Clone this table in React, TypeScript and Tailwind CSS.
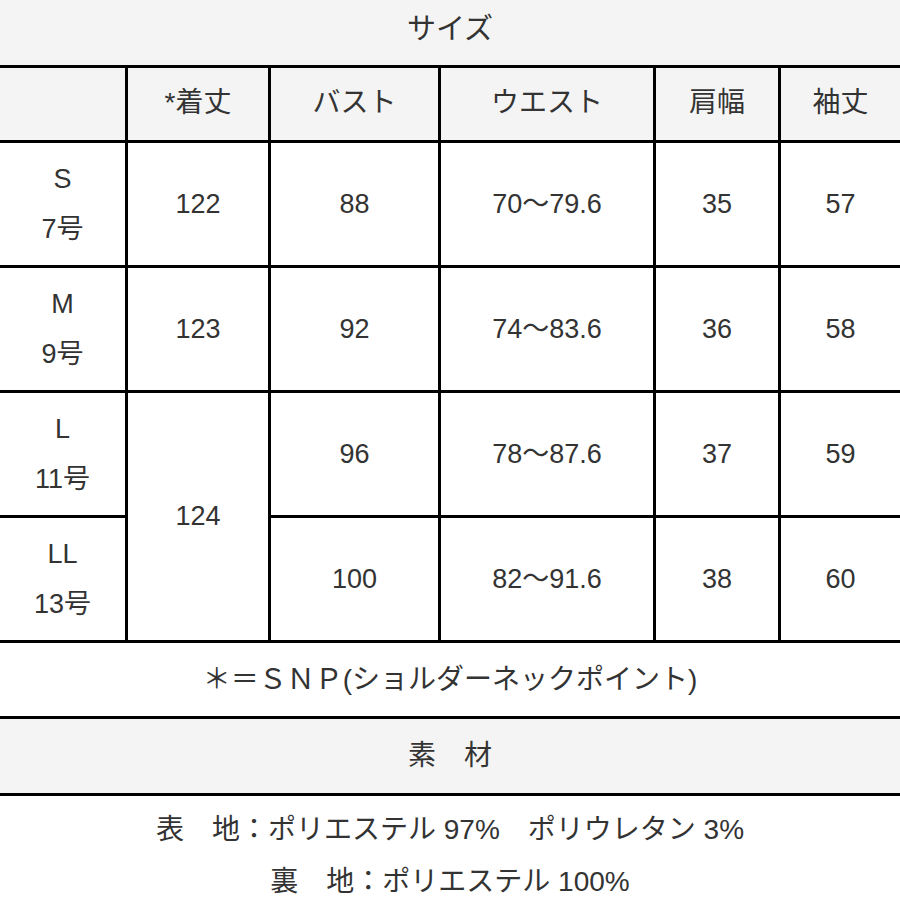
import React from "react";

const font = {
  fontFamily: '"Liberation Sans", "Noto Sans CJK JP", sans-serif',
};

const headers = ["", "*着丈", "バスト", "ウエスト", "肩幅", "袖丈"];

const rows = [
  { size: "S", no: "7号", bust: "88", waist: "70〜79.6", shoulder: "35", sleeve: "57" },
  { size: "M", no: "9号", bust: "92", waist: "74〜83.6", shoulder: "36", sleeve: "58" },
  { size: "L", no: "11号", bust: "96", waist: "78〜87.6", shoulder: "37", sleeve: "59" },
  { size: "LL", no: "13号", bust: "100", waist: "82〜91.6", shoulder: "38", sleeve: "60" },
];

const lengths = ["122", "123"];

const Cell = ({ children, className = "" }: { children?: React.ReactNode; className?: string }) => (
  <div className={`flex items-center justify-center bg-white text-[27px] text-[#333] ${className}`}>
    {children}
  </div>
);

export default function App() {
  return (
    <div className="w-[900px] h-[900px] bg-white overflow-hidden" style={font}>
      <div className="h-[65px] bg-[#f4f4f4] flex items-center justify-center text-[29px] text-[#333] pb-[6px]">
        サイズ
      </div>
      <div className="grid grid-cols-[125px_140px_167px_212px_122px_1fr] grid-rows-[72px_122px_122px_122px_122px] gap-[3px] bg-black py-[3px]">
        {headers.map((h, i) => (
          <Cell key={i} className="bg-[#f4f4f4]! pb-[3px] text-[28px]!">
            {h}
          </Cell>
        ))}
        {rows.map((r, i) => (
          <React.Fragment key={r.size}>
            <Cell className="flex-col leading-[50px]">
              <span>{r.size}</span>
              <span>{r.no}</span>
            </Cell>
            {i < 2 && <Cell>{lengths[i]}</Cell>}
            {i === 2 && <Cell className="row-span-2">124</Cell>}
            <Cell>{r.bust}</Cell>
            <Cell>{r.waist}</Cell>
            <Cell>{r.shoulder}</Cell>
            <Cell>{r.sleeve}</Cell>
          </React.Fragment>
        ))}
      </div>
      <div className="h-[73px] flex items-center justify-center text-[28px] text-[#333] bg-white">
        ＊＝ＳＮＰ(ショルダーネックポイント)
      </div>
      <div className="h-[80px] border-y-[3px] border-black bg-[#f4f4f4] flex items-center justify-center text-[28px] text-[#333]">
        素　材
      </div>
      <div className="flex flex-col items-center pt-[8px] text-[28px] text-[#333] leading-[52px]">
        <div>表　地：ポリエステル 97%　ポリウレタン 3%</div>
        <div>裏　地：ポリエステル 100%</div>
      </div>
    </div>
  );
}
